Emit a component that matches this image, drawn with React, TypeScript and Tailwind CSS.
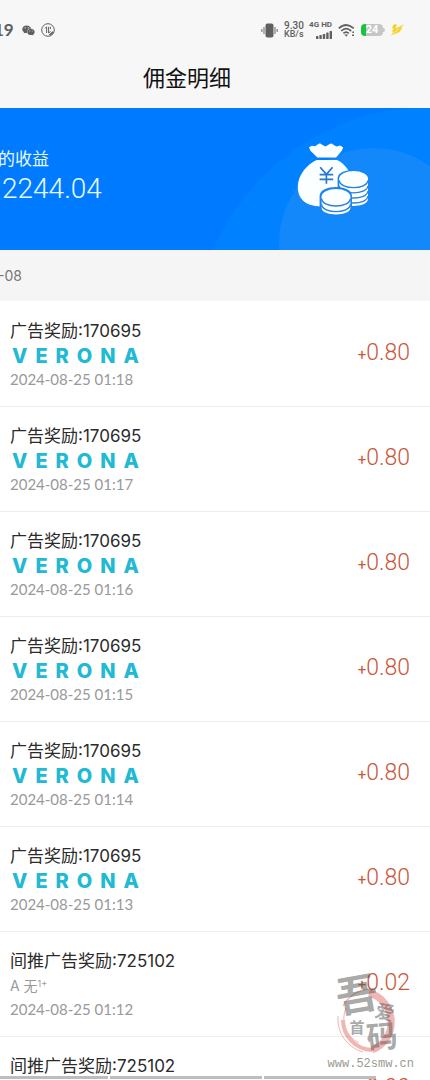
import { FaWeixin } from "react-icons/fa";

/* ═══════════════════════════════════════════
   Ledger Data
   ═══════════════════════════════════════════ */

interface Entry {
  title: string;
  brand?: string;
  member?: string;
  time: string;
  amount: string;
}

const ENTRIES: Entry[] = [
  { title: "广告奖励:170695", brand: "VERONA", time: "2024-08-25 01:18", amount: "0.80" },
  { title: "广告奖励:170695", brand: "VERONA", time: "2024-08-25 01:17", amount: "0.80" },
  { title: "广告奖励:170695", brand: "VERONA", time: "2024-08-25 01:16", amount: "0.80" },
  { title: "广告奖励:170695", brand: "VERONA", time: "2024-08-25 01:15", amount: "0.80" },
  { title: "广告奖励:170695", brand: "VERONA", time: "2024-08-25 01:14", amount: "0.80" },
  { title: "广告奖励:170695", brand: "VERONA", time: "2024-08-25 01:13", amount: "0.80" },
  { title: "间推广告奖励:725102", member: "A 无", time: "2024-08-25 01:12", amount: "0.02" },
  { title: "间推广告奖励:725102", member: "A 无", time: "2024-08-25 01:12", amount: "0.00" },
];

/* ═══════════════════════════════════════════
   Status Bar
   ═══════════════════════════════════════════ */

function StatusBar() {
  return (
    <div className="flex h-[60px] items-center justify-between pr-[26px] text-[#606060]">
      <div className="flex items-center">
        <span className="-ml-1.5 font-['Lato'] text-[17px] leading-5 font-bold">19</span>
        <FaWeixin className="ml-2 size-[13px]" />
        <svg className="ml-1.5 size-[14px]" viewBox="0 0 14 14" fill="none" stroke="currentColor">
          <circle cx="7" cy="7" r="6.3" strokeWidth="1" />
          <path d="M4 5.4 5.6 3.8V10M7.6 3.8V10L9.6 8.4M9.4 3.8V6" strokeWidth="1" />
          <path d="M8.6 12.2 12.2 8.8" strokeWidth="1.8" />
        </svg>
      </div>

      <div className="flex items-center gap-1.5">
        {/* Vibrate */}
        <svg className="h-[15px] w-[17px]" viewBox="0 0 17 15" fill="currentColor">
          <rect x="4.5" y="0.5" width="8" height="14" rx="2" />
          <path d="M2.2 4h1.6v7H2.2zM0 6h1.6v3H0zM13.2 4h1.6v7h-1.6zM15.4 6H17v3h-1.6z" opacity="0.6" />
        </svg>
        <div className="w-5 font-['Roboto'] text-[10px] leading-2 font-medium">
          <div>9.30</div>
          <div className="text-[9px]">KB/s</div>
        </div>
        <div className="flex w-[22px] flex-col items-end gap-0.5 font-['Roboto'] text-[8px] leading-2 font-bold">
          <span className="whitespace-nowrap">4G HD</span>
          <svg className="h-2 w-4" viewBox="0 0 16 8" fill="currentColor">
            <rect x="0" y="5" width="2.4" height="3" rx="0.6" />
            <rect x="3.4" y="4" width="2.4" height="4" rx="0.6" />
            <rect x="6.8" y="3" width="2.4" height="5" rx="0.6" />
            <rect x="10.2" y="1.5" width="2.4" height="6.5" rx="0.6" />
            <rect x="13.6" y="0" width="2.4" height="8" rx="0.6" />
          </svg>
        </div>
        <svg className="h-[13px] w-[17px]" viewBox="0 0 17 13" fill="none" stroke="currentColor" strokeWidth="1.7">
          <path d="M0.8 4.4Q8 -2.4 15.8 4.4" />
          <path d="M3.2 7Q8 2.4 13.2 7" />
          <path d="M5.4 9.4Q8 6.8 10.8 9.4" />
          <path d="M6.4 10.4H10L8.2 12.8Z" fill="currentColor" stroke="none" />
          <path d="M14 11.2h2M14.4 8.2h1.6" strokeWidth="1.6" />
        </svg>
        <div className="flex items-center">
          <div className="flex h-3 w-[22px] items-center justify-center overflow-hidden rounded-[4px] bg-linear-to-r from-[#18c43c] from-25% to-[#c6c6c6] to-25% font-['Roboto'] text-[11px] leading-3 font-bold text-white">
            24
          </div>
          <div className="h-1 w-0.5 rounded-r-sm bg-[#c6c6c6]" />
        </div>
        <svg className="h-3 w-[13px]" viewBox="0 0 13 12" fill="#f3d327">
          <path d="M2.4 0.6H6L4.6 4.6 13 0.4 9.6 4.6 11.6 4.4 8.4 7.2 9.6 7.4 0 11.8 2.4 7.4H0.8L3 4.6H1Z" />
          <path d="M1.6 10.6 7.6 4.6" stroke="#f7f7f7" strokeWidth="0.8" />
        </svg>
      </div>
    </div>
  );
}

/* ═══════════════════════════════════════════
   Income Banner
   ═══════════════════════════════════════════ */

function MoneyBag() {
  return (
    <svg className="relative size-[72px]" viewBox="0 0 72 72" fill="#fbffff">
      <path d="M12 4.2 15 2.8 18 3.2 22.2 0.6Q23.8 0.2 25 1.8L28.6 3.4 32.6 1Q34.6 0 36 1.4L39.4 3.4 43 2.6 46.2 4.4 44.8 7.8 39 14.6H20.4L13.4 7.8Z" />
      <path d="M19.6 17H40C48 20.6 54 29 55 39V63.4H24C6 63.4 0.8 54 0.8 43.6 0.8 32.4 9.6 21.4 19.6 17Z" />
      <path
        d="M23.2 24.2 29.4 31.4 35.6 24.2M29.4 31.4V40.8M22.6 31.6H36.2M22.6 36.4H36.2"
        fill="none"
        stroke="#2877d0"
        strokeWidth="1.7"
      />
      {/* back stack */}
      <g stroke="#2c80dc" strokeWidth="1.4">
        <path d="M40.6 35V57C40.6 66 72 66 72 57V35C72 24.2 40.6 24.2 40.6 35Z" fill="#1b84ee" stroke="none" />
        <path d="M42.2 35.6V56C42.2 65.2 71 65.2 71 56V35.6Z" stroke="none" />
        <ellipse cx="56.6" cy="35.4" rx="14.4" ry="7.4" stroke="none" />
        <path
          d="M42.2 37.4C43 47 70 47 71 37.4M42.2 42.8C43 52.2 70 52.2 71 42.8M42.2 48C43 57.4 70 57.4 71 48M42.2 53C43 62.4 70 62.4 71 53"
          fill="none"
        />
      </g>
      {/* front stack */}
      <g stroke="#2c80dc" strokeWidth="1.4">
        <path d="M22.6 53V66C22.6 74 55 74 55 66V53C55 41 22.6 41 22.6 53Z" fill="#1b84ee" stroke="none" />
        <path d="M24.6 54V65C24.6 73.6 53.4 73.6 53.4 65V54Z" stroke="none" />
        <ellipse cx="39" cy="53.6" rx="14.4" ry="7.6" stroke="none" />
        <path d="M24.6 55.6C25.4 65.4 52.6 65.4 53.4 55.6M24.6 61.4C25.4 71 52.6 71 53.4 61.4" fill="none" />
      </g>
    </svg>
  );
}

function IncomeBanner() {
  return (
    <section className="relative flex h-[142px] items-center justify-between overflow-hidden bg-[#007aff] pr-[61px] text-[#e6fbff]">
      <svg className="absolute inset-y-0 right-0 h-full w-[230px]" viewBox="0 0 230 142">
        <circle cx="230" cy="235" r="236" fill="#0081ff" />
        <circle cx="174" cy="135" r="95" fill="#1288fb" />
      </svg>
      <div className="relative pb-1">
        <div className="-ml-0.5 text-[17px] leading-6">的收益</div>
        <div className="ml-0.5 font-['Roboto'] text-[28px] leading-9 font-light">2244.04</div>
      </div>
      <MoneyBag />
    </section>
  );
}

/* ═══════════════════════════════════════════
   Ledger Row
   ═══════════════════════════════════════════ */

function LedgerRow({ entry }: { entry: Entry }) {
  return (
    <li className="flex h-[105px] shrink-0 items-center justify-between border-b border-[#ededed] pr-5 pl-2.5">
      <div>
        <div className="text-[17px] leading-6 text-[#2b2b2b]">{entry.title}</div>
        {entry.brand ? (
          <div className="pl-0.5 text-[20px] leading-[26px] font-extrabold tracking-[8px] text-[#21b9d3]">
            {entry.brand}
          </div>
        ) : (
          <div className="text-[14px] leading-[26px] text-[#999999]">
            {entry.member}
            <sup className="text-[9px]">1+</sup>
          </div>
        )}
        <div className="font-['Lato'] text-[15px] leading-5 text-[#999999]">{entry.time}</div>
      </div>
      <div className="font-['Roboto'] text-[23px] leading-7 font-light text-[#c9573c]">
        <span className="text-[15px] font-normal">+</span>
        {entry.amount}
      </div>
    </li>
  );
}

/* ═══════════════════════════════════════════
   Site Stamp — ring seal over the list
   ═══════════════════════════════════════════ */

function SiteStamp() {
  return (
    <div className="pointer-events-none absolute right-4 bottom-2 flex flex-col items-center">
      <svg className="h-[86px] w-[72px]" viewBox="0 0 72 86">
        <g fill="none" stroke="#e0524d" opacity="0.42">
          <path d="M34 23A30 30 0 0 1 37 80" strokeWidth="7" />
          <path d="M37 80A30 30 0 0 1 8 50" strokeWidth="4" />
          <path d="M3 46A34 34 0 0 0 28 82M11 38A27 27 0 0 0 24 73" strokeWidth="1" />
          <path d="M8 36A33 33 0 0 1 34 19" strokeWidth="1.4" />
        </g>
        <g
          className="font-['Noto_Sans_CJK_SC']"
          fill="#555555"
          fillOpacity="0.52"
          fontWeight="700"
          textAnchor="middle"
        >
          <text x="22" y="40" fontSize="42" transform="rotate(-10 22 26)">吾</text>
          <text x="22" y="63" fontSize="15">首</text>
          <text x="50" y="49" fontSize="19" transform="rotate(14 50 42)">爱</text>
          <text x="47" y="78" fontSize="31" transform="rotate(-6 47 68)">码</text>
        </g>
      </svg>
      <span className="font-['Liberation_Mono'] text-[12px] leading-4 text-[#9a9a92]">www.52smw.cn</span>
    </div>
  );
}

/* ═══════════════════════════════════════════
   Commission Page
   ═══════════════════════════════════════════ */

export default function App() {
  return (
    <main className="relative flex h-screen flex-col overflow-hidden bg-white font-['Inter','Noto_Sans_CJK_SC',sans-serif]">
      <header className="shrink-0 bg-[#f7f7f7]">
        <StatusBar />
        <h1 className="flex h-12 items-center justify-center pr-14 pb-3 text-[22px] text-[#111111]">佣金明细</h1>
      </header>

      <div className="shrink-0">
        <IncomeBanner />
        <div className="flex h-[51px] items-center bg-[#f5f5f5] text-[14px] text-[#777777]">
          <span className="-ml-0.5">-08</span>
        </div>
      </div>

      <ul className="flex min-h-0 flex-1 flex-col overflow-hidden pt-px">
        {ENTRIES.map((entry, i) => (
          <LedgerRow key={i} entry={entry} />
        ))}
      </ul>

      <SiteStamp />

      {/* Segmented progress strip */}
      <div className="absolute inset-x-0 bottom-px flex h-[3px] gap-0.5">
        <div className="w-1/4 bg-[#bdbdbd]" />
        <div className="flex-1 bg-[#bdbdbd]" />
        <div className="w-[112px] bg-[#bdbdbd]" />
        <div className="w-[52px]" />
      </div>
    </main>
  );
}
